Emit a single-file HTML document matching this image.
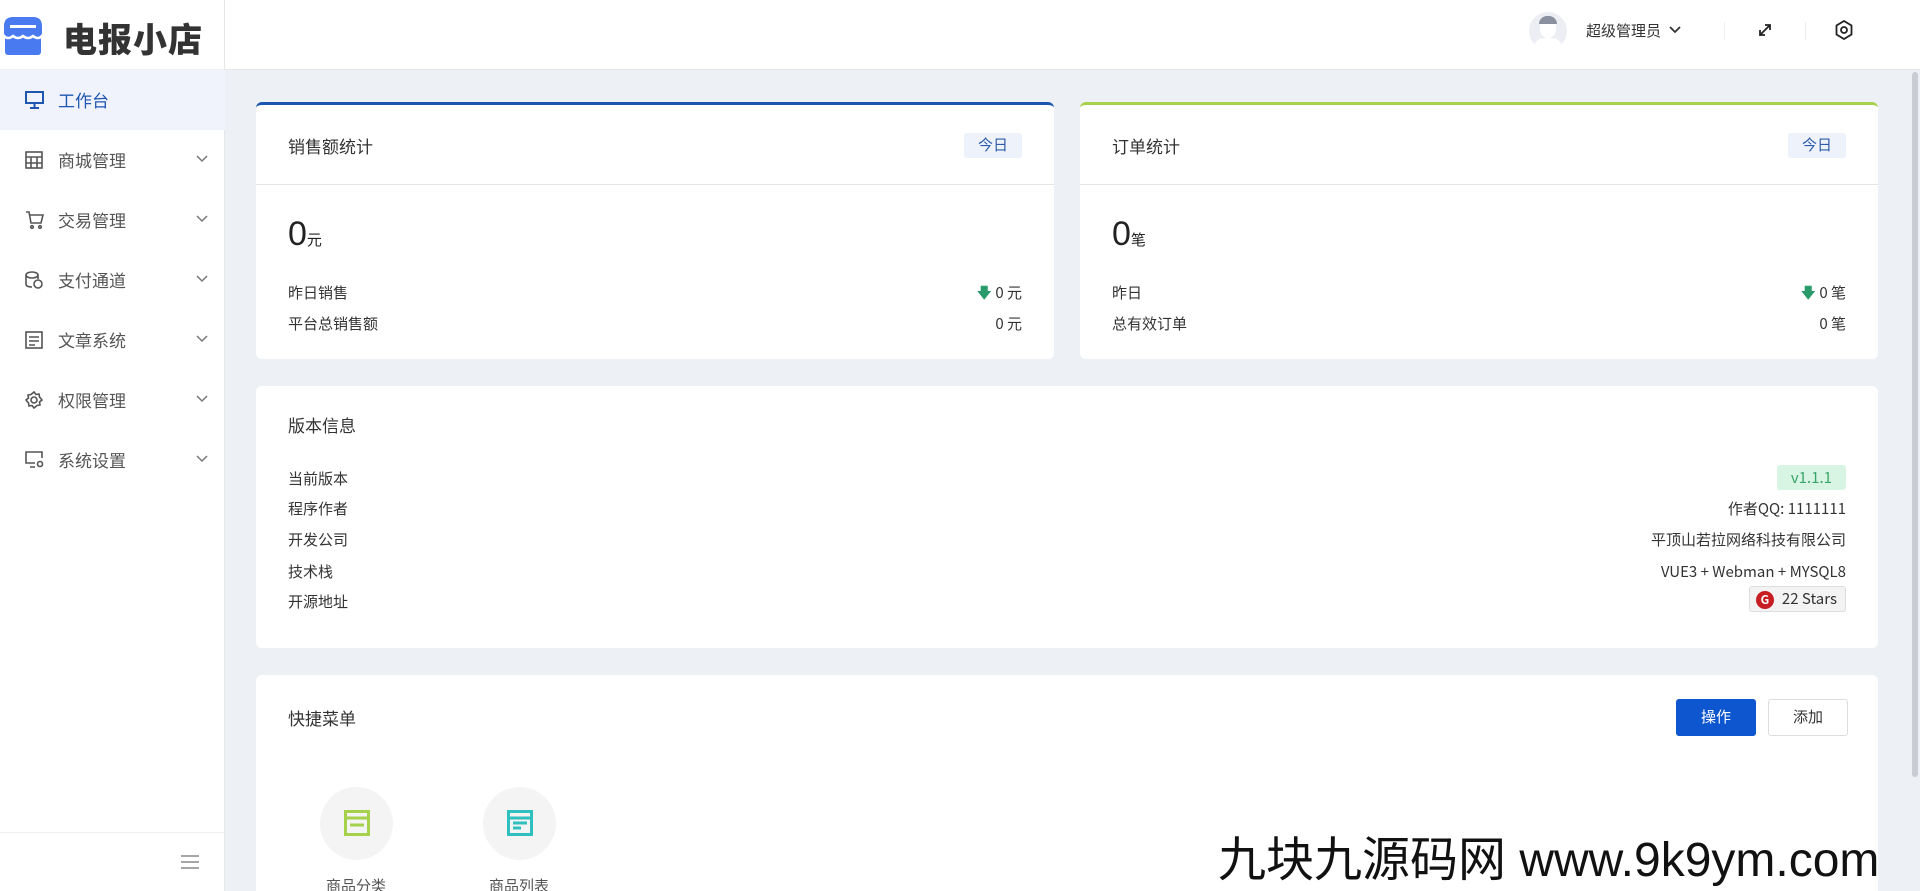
<!DOCTYPE html>
<html style="overflow:hidden;height:891px"><head><meta charset="utf-8">
<style>
*{box-sizing:border-box;margin:0;padding:0}
body{width:1920px;height:891px;overflow:hidden;background:#edf0f4;font-family:"Liberation Sans","Noto Sans CJK SC",sans-serif;color:#333;position:relative}
.side{position:absolute;left:0;top:0;width:225px;height:891px;background:#fff;border-right:1px solid #e6e6e6}
.logo{height:70px;border-bottom:1px solid #eee;position:relative}
.logo .t{position:absolute;left:63px;top:13px;font-size:34px;font-weight:900;color:#333;letter-spacing:1px;font-family:"Noto Sans CJK SC",sans-serif}
.mi{position:absolute;left:0;width:225px;height:60px;font-size:17px;color:#555;font-family:"Noto Sans CJK SC",sans-serif}
.mi span{position:absolute;left:58px;top:16px;line-height:28px}
.mi svg.ic{position:absolute;left:25px;top:21px}
.mi svg.ch{position:absolute;left:196px;top:25px}
.mi.act{background:#f0f3fc;color:#1f56b0}
.hdr{position:absolute;left:225px;top:0;right:0;height:70px;background:#fff;border-bottom:1px solid #e6e6e6}
.card{position:absolute;background:#fff;border-radius:6px}
.ct{position:absolute;left:32px;font-size:17px;color:#333;font-family:"Noto Sans CJK SC",sans-serif}
.tag{position:absolute;right:32px;top:28px;width:58px;height:25px;background:#eef2fb;color:#2f5ca8;font-size:15px;text-align:center;line-height:25px;border-radius:3px}
.row{position:absolute;left:32px;right:32px;font-size:15px;color:#333;height:20px;line-height:20px;font-family:"Noto Sans CJK SC",sans-serif}
.row b{font-weight:normal;position:absolute;right:0;top:0}
.big{position:absolute;left:32px;top:110px;font-size:34px;color:#222}
.big small{font-size:15px}
</style></head><body>
<div class="side">
 <div class="logo">
  <svg style="position:absolute;left:2px;top:16px" width="42" height="39" viewBox="0 0 42 39"><rect x="3" y="17" width="36" height="22" rx="3" fill="#4a7af0"/><path d="M2 10 Q2 1 11 1 H31 Q40 1 40 10 V18 Q35 23 30 18 Q26 23 21 18 Q16 23 11 18 Q6 23 2 18Z" fill="#4a7af0"/><path d="M2 20 Q6 24 11 20 Q16 24 21 20 Q26 24 31 20 Q36 24 40 20" stroke="#fff" stroke-width="2.5" fill="none"/><rect x="8" y="9" width="26" height="3" fill="#fff"/></svg>
  <div class="t">电报小店</div>
 </div>
 <div class="mi act" style="top:70px"><svg class="ic" width="19" height="18" viewBox="0 0 19 18" fill="none" stroke="#1f56b0" stroke-width="2"><rect x="1" y="1" width="17" height="11"/><path d="M9.5 12v4M5 17h9"/></svg><span>工作台</span></div>
 <div class="mi" style="top:130px"><svg class="ic" width="18" height="18" viewBox="0 0 18 18" fill="none" stroke="#555" stroke-width="1.6"><rect x="1" y="1" width="16" height="16"/><path d="M1 6h16M6 6v11M12 6v11M1 12h16"/></svg><span>商城管理</span><svg class="ch" width="12" height="8" viewBox="0 0 12 8"><path d="M1 1l5 5 5-5" stroke="#777" stroke-width="1.5" fill="none"/></svg></div>
 <div class="mi" style="top:190px"><svg class="ic" width="19" height="18" viewBox="0 0 19 18" fill="none" stroke="#555" stroke-width="1.6"><path d="M1 1h3l2 11h10l2-8H5"/><circle cx="7" cy="16" r="1.3"/><circle cx="15" cy="16" r="1.3"/></svg><span>交易管理</span><svg class="ch" width="12" height="8" viewBox="0 0 12 8"><path d="M1 1l5 5 5-5" stroke="#777" stroke-width="1.5" fill="none"/></svg></div>
 <div class="mi" style="top:250px"><svg class="ic" width="18" height="18" viewBox="0 0 18 18" fill="none" stroke="#555" stroke-width="1.6"><ellipse cx="7" cy="4" rx="6" ry="3"/><path d="M1 4v9q0 3 6 3M13 4v4"/><circle cx="13" cy="13" r="4"/></svg><span>支付通道</span><svg class="ch" width="12" height="8" viewBox="0 0 12 8"><path d="M1 1l5 5 5-5" stroke="#777" stroke-width="1.5" fill="none"/></svg></div>
 <div class="mi" style="top:310px"><svg class="ic" width="18" height="18" viewBox="0 0 18 18" fill="none" stroke="#555" stroke-width="1.6"><rect x="1" y="1" width="16" height="16"/><path d="M4 6h10M4 10h10M4 14h6"/></svg><span>文章系统</span><svg class="ch" width="12" height="8" viewBox="0 0 12 8"><path d="M1 1l5 5 5-5" stroke="#777" stroke-width="1.5" fill="none"/></svg></div>
 <div class="mi" style="top:370px"><svg class="ic" width="18" height="18" viewBox="0 0 18 18" fill="none" stroke="#555" stroke-width="1.6"><circle cx="9" cy="9" r="3"/><path d="M9 1l2 2.5 3-.5.5 3L17 9l-2.5 2 .5 3-3 .5L9 17l-2-2.5-3 .5-.5-3L1 9l2.5-2L3 4l3-.5z"/></svg><span>权限管理</span><svg class="ch" width="12" height="8" viewBox="0 0 12 8"><path d="M1 1l5 5 5-5" stroke="#777" stroke-width="1.5" fill="none"/></svg></div>
 <div class="mi" style="top:430px"><svg class="ic" width="19" height="18" viewBox="0 0 19 18" fill="none" stroke="#555" stroke-width="1.6"><path d="M10 12H1V1h16v6M5 16h5"/><circle cx="15" cy="13" r="2.5"/></svg><span>系统设置</span><svg class="ch" width="12" height="8" viewBox="0 0 12 8"><path d="M1 1l5 5 5-5" stroke="#777" stroke-width="1.5" fill="none"/></svg></div>
 <div style="position:absolute;left:0;right:0;top:832px;border-top:1px solid #eee"></div>
 <svg style="position:absolute;left:181px;top:855px" width="18" height="14" viewBox="0 0 18 14" stroke="#888" stroke-width="1.5"><path d="M0 1h18M0 7h18M0 13h18"/></svg>
</div>
<div class="hdr">
 <div style="position:absolute;left:1304px;top:12px;width:38px;height:38px;border-radius:50%;background:#eceef3;overflow:hidden"><div style="position:absolute;left:11px;top:6px;width:16px;height:20px;border-radius:8px;background:#fff"></div><div style="position:absolute;left:10px;top:4px;width:18px;height:8px;border-radius:8px 8px 0 0;background:#8a90a0"></div><div style="position:absolute;left:5px;top:26px;width:28px;height:20px;border-radius:14px;background:#fff"></div></div>
 <div style="position:absolute;left:1361px;top:20px;font-size:15px;color:#333">超级管理员</div>
 <svg style="position:absolute;left:1444px;top:26px" width="12" height="8" viewBox="0 0 12 8"><path d="M1 1l5 5 5-5" stroke="#333" stroke-width="1.8" fill="none"/></svg>
 <div style="position:absolute;left:1499px;top:22px;height:18px;border-left:1px solid #eee"></div>
 <svg style="position:absolute;left:1533px;top:23px" width="14" height="14" viewBox="0 0 14 14" stroke="#222" stroke-width="1.8" fill="none"><path d="M2 12L12 2M7 2h5v5M2 7v5h5"/></svg>
 <div style="position:absolute;left:1580px;top:22px;height:18px;border-left:1px solid #eee"></div>
 <svg style="position:absolute;left:1610px;top:20px" width="18" height="20" viewBox="0 0 18 20" stroke="#222" stroke-width="1.8" fill="none"><path d="M9 1l7.5 4.5v9L9 19l-7.5-4.5v-9z"/><circle cx="9" cy="10" r="3"/></svg>
</div>
<div style="position:absolute;left:1912px;top:72px;width:6px;height:705px;background:#c9ccd2;border-radius:3px"></div>

<div class="card" style="left:256px;top:102px;width:798px;height:257px;border-top:3px solid #1a56b0">
 <div class="ct" style="top:28px">销售额统计</div><div class="tag">今日</div>
 <div style="position:absolute;left:0;right:0;top:79px;border-top:1px solid #e5e5e5"></div>
 <div class="big">0<small>元</small></div>
 <div class="row" style="top:178px">昨日销售<b><span style="color:#2a9a6a">🡇</span> 0 元</b></div>
 <div class="row" style="top:209px">平台总销售额<b>0 元</b></div>
</div>
<div class="card" style="left:1080px;top:102px;width:798px;height:257px;border-top:3px solid #a6d14a">
 <div class="ct" style="top:28px">订单统计</div><div class="tag">今日</div>
 <div style="position:absolute;left:0;right:0;top:79px;border-top:1px solid #e5e5e5"></div>
 <div class="big">0<small>笔</small></div>
 <div class="row" style="top:178px">昨日<b><span style="color:#2a9a6a">🡇</span> 0 笔</b></div>
 <div class="row" style="top:209px">总有效订单<b>0 笔</b></div>
</div>
<div class="card" style="left:256px;top:386px;width:1622px;height:262px">
 <div class="ct" style="top:26px">版本信息</div>
 <div class="row" style="top:83px">当前版本<b style="top:-4px;background:#d8f5e3;color:#3aa468;padding:0 14px;height:25px;line-height:25px;border-radius:3px">v1.1.1</b></div>
 <div class="row" style="top:113px">程序作者<b>作者QQ: 1111111</b></div>
 <div class="row" style="top:144px">开发公司<b>平顶山若拉网络科技有限公司</b></div>
 <div class="row" style="top:176px">技术栈<b>VUE3 + Webman + MYSQL8</b></div>
 <div class="row" style="top:206px">开源地址<b style="top:-6px;height:26px;line-height:24px;border:1px solid #ddd;background:#f3f3f3;padding:0 8px 0 32px;border-radius:3px"><span style="position:absolute;left:6px;top:4px;width:18px;height:18px;border-radius:50%;background:#c71d23;color:#fff;font-size:12px;line-height:18px;text-align:center;font-weight:bold">G</span>22 Stars</b></div>
</div>
<div class="card" style="left:256px;top:675px;width:1622px;height:216px;border-radius:6px 6px 0 0;overflow:hidden">
 <div class="ct" style="top:30px">快捷菜单</div>
 <div style="position:absolute;left:1420px;top:24px;width:80px;height:37px;background:#0d56d0;color:#fff;border-radius:3px;font-size:15px;text-align:center;line-height:37px">操作</div>
 <div style="position:absolute;left:1512px;top:24px;width:80px;height:37px;border:1px solid #ddd;color:#333;border-radius:3px;font-size:15px;text-align:center;line-height:35px">添加</div>
 <div style="position:absolute;left:64px;top:112px;width:73px;height:73px;border-radius:50%;background:#f4f4f4"><svg style="position:absolute;left:24px;top:23px" width="26" height="26" viewBox="0 0 26 26" fill="none" stroke="#a6d14a" stroke-width="3"><rect x="1.5" y="1.5" width="23" height="23"/><path d="M1.5 8h23M6 15h14"/></svg></div>
 <div style="position:absolute;left:227px;top:112px;width:73px;height:73px;border-radius:50%;background:#f4f4f4"><svg style="position:absolute;left:24px;top:23px" width="26" height="26" viewBox="0 0 26 26" fill="none" stroke="#2fbfbf" stroke-width="3"><rect x="1.5" y="1.5" width="23" height="23"/><path d="M1.5 8h23M6 13h14M6 18h8"/></svg></div>
 <div style="position:absolute;left:70px;top:200px;font-size:15px;color:#555">商品分类</div>
 <div style="position:absolute;left:233px;top:200px;font-size:15px;color:#555">商品列表</div>
</div>
<div style="position:absolute;left:1218px;top:820px;font-size:48px;color:#111;white-space:nowrap;font-family:'Liberation Sans','Noto Sans CJK SC',sans-serif">九块九源码网 www.9k9ym.com</div>
</body></html>
